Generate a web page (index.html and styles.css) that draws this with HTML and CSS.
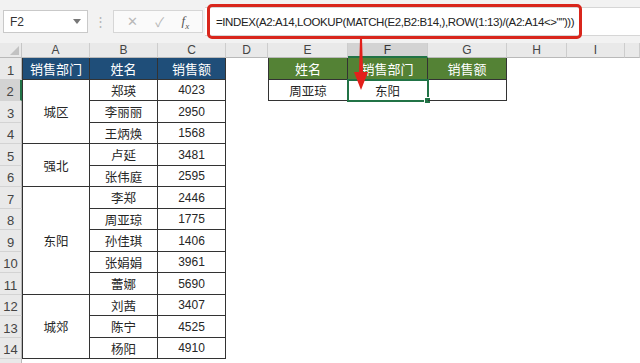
FILE: index.html
```html
<!DOCTYPE html>
<html lang="zh">
<head>
    <meta charset="UTF-8">
    <title>INDEX LOOKUP</title>
    <link rel="stylesheet" href="styles.css">
</head>
<body>

<div class="app">
    <div class="toolbar">
        <div class="namebox">
            <span>F2</span>
            <svg width="8" height="5" viewBox="0 0 8 5"><path d="M0 0 L8 0 L4 5 Z" fill="#777"/></svg>
        </div>
        <div class="grip">⋮</div>
        <div class="fnbox">
            <span class="fn-x">✕</span>
            <span class="fn-ok">✓</span>
            <span class="fn-fx">f<sub>x</sub></span>
        </div>
        <div class="formula">
            <div class="callout">=INDEX(A2:A14,LOOKUP(MATCH(E2,B2:B14,),ROW(1:13)/(A2:A14&lt;&gt;"")))</div>
        </div>
    </div>

    <div class="sheet">
        <!-- column headers -->
        <div class="corner"></div>
        <div class="ch">A</div>
        <div class="ch">B</div>
        <div class="ch">C</div>
        <div class="ch">D</div>
        <div class="ch">E</div>
        <div class="ch ch-sel">F</div>
        <div class="ch">G</div>
        <div class="ch">H</div>
        <div class="ch">I</div>
        <div class="ch"></div>

        <!-- row 1 -->
        <div class="rh">1</div>
        <div class="c hd-blue first">销售部门</div>
        <div class="c hd-blue">姓名</div>
        <div class="c hd-blue">销售额</div>
        <div class="c hd-green first col-e">姓名</div>
        <div class="c hd-green">销售部门</div>
        <div class="c hd-green">销售额</div>

        <!-- row 2 -->
        <div class="rh rh-sel">2</div>
        <div class="c first span3">城区</div>
        <div class="c">郑瑛</div>
        <div class="c num">4023</div>
        <div class="c first col-e">周亚琼</div>
        <div class="c sel">东阳</div>
        <div class="c"></div>

        <div class="rh">3</div>
        <div class="c">李丽丽</div>
        <div class="c num">2950</div>

        <div class="rh">4</div>
        <div class="c">王炳焕</div>
        <div class="c num">1568</div>

        <div class="rh">5</div>
        <div class="c first span2">强北</div>
        <div class="c">卢延</div>
        <div class="c num">3481</div>

        <div class="rh">6</div>
        <div class="c">张伟庭</div>
        <div class="c num">2595</div>

        <div class="rh">7</div>
        <div class="c first span5">东阳</div>
        <div class="c">李郑</div>
        <div class="c num">2446</div>

        <div class="rh">8</div>
        <div class="c">周亚琼</div>
        <div class="c num">1775</div>

        <div class="rh">9</div>
        <div class="c">孙佳琪</div>
        <div class="c num">1406</div>

        <div class="rh">10</div>
        <div class="c">张娟娟</div>
        <div class="c num">3961</div>

        <div class="rh">11</div>
        <div class="c">蕾娜</div>
        <div class="c num">5690</div>

        <div class="rh">12</div>
        <div class="c first span3">城郊</div>
        <div class="c">刘茜</div>
        <div class="c num">3407</div>

        <div class="rh">13</div>
        <div class="c">陈宁</div>
        <div class="c num">4525</div>

        <div class="rh">14</div>
        <div class="c">杨阳</div>
        <div class="c num">4910</div>

        <div class="rh"></div>
    </div>

    <!-- annotation arrow -->
    <svg class="arrow" width="18" height="54" viewBox="0 0 18 54">
        <polygon points="8,0 10,0 11,34 16,34 9,52 2,34 7,34" fill="#e3201b"/>
    </svg>
</div>

</body>
</html>
```

FILE: styles.css
```css
body {
    margin: 0;
    overflow: hidden;
    background-color: #ffffff;
    font-family: "Liberation Sans", "Noto Sans CJK SC", sans-serif;
    color: #222222;
}
.app {
    position: relative;
    width: 640px;
    height: 363px;
    overflow: hidden;
}

/* formula bar */
.toolbar {
    height: 43px;
    display: flex;
    align-items: center;
    background-color: #f2f2f2;
}
.namebox {
    margin-left: 3px;
    width: 85px;
    height: 23px;
    box-sizing: border-box;
    border: 1px solid #c9c9c9;
    background-color: #ffffff;
    display: flex;
    align-items: center;
    justify-content: space-between;
    padding: 0 6px 0 6px;
    font-size: 12px;
    color: #333333;
}
.grip {
    width: 25px;
    text-align: center;
    color: #b5b5b5;
    font-size: 13px;
}
.fnbox {
    width: 90px;
    height: 23px;
    box-sizing: border-box;
    border: 1px solid #d6d6d6;
    background-color: #fafafa;
    display: flex;
    align-items: center;
    justify-content: space-around;
    padding: 0 4px;
}
.fn-x {
    color: #b8b8b8;
    font-size: 13px;
}
.fn-ok {
    color: #b8b8b8;
    font-size: 13px;
}
.fn-fx {
    font-family: "Liberation Serif", serif;
    font-style: italic;
    color: #555555;
    font-size: 13px;
}
.fn-fx sub {
    font-size: 9px;
}
.formula {
    flex: 1;
    margin-left: 2px;
    height: 27px;
    background-color: #ffffff;
    border-top: 1px solid #d6d6d6;
    border-bottom: 1px solid #d6d6d6;
    display: flex;
    align-items: center;
}
.callout {
    margin-left: 2px;
    width: 375px;
    height: 35px;
    flex-shrink: 0;
    box-sizing: border-box;
    border: 3px solid #d9261c;
    border-radius: 5px;
    display: flex;
    align-items: center;
    padding-left: 6px;
    font-size: 11.5px;
    letter-spacing: -0.4px;
    color: #222222;
    white-space: nowrap;
}

/* sheet grid */
.sheet {
    display: grid;
    grid-template-columns: 22px 68px 68px 68px 42px 80px 80px 79px 60px 58px 1fr;
    grid-template-rows: 15px repeat(7, 22px 21px) 20px;
}
.corner {
    background-color: #e9e9e9;
    border-right: 1px solid #c6c6c6;
    border-bottom: 1px solid #b9b9b9;
    position: relative;
}
.corner::after {
    content: "";
    position: absolute;
    right: 2px;
    bottom: 2px;
    border-left: 9px solid transparent;
    border-bottom: 9px solid #c2c2c2;
}
.ch {
    background-color: #e9e9e9;
    border-right: 1px solid #cdcdcd;
    border-bottom: 1px solid #b9b9b9;
    display: flex;
    align-items: center;
    justify-content: center;
    font-size: 12px;
    color: #444444;
}
.ch-sel {
    background-color: #d3d3d3;
    border-bottom: 2px solid #217346;
    color: #333333;
}
.rh {
    grid-column: 1;
    background-color: #e9e9e9;
    border-right: 1px solid #b9b9b9;
    border-bottom: 1px solid #d3d3d3;
    display: flex;
    align-items: flex-end;
    justify-content: center;
    padding-bottom: 1px;
    font-size: 13px;
    color: #444444;
}
.rh-sel {
    background-color: #d3d3d3;
    border-right: 2px solid #217346;
}

/* table cells */
.c {
    border-right: 1px solid #333333;
    border-bottom: 1px solid #333333;
    display: flex;
    align-items: center;
    justify-content: center;
    font-family: "Noto Sans CJK SC", sans-serif;
    font-size: 12.5px;
    color: #262626;
    position: relative;
}
.first {
    border-left: 1px solid #333333;
}
.col-e {
    grid-column: 6;
}
.num {
    font-family: "Liberation Sans", sans-serif;
    font-size: 12px;
}
.span2 {
    grid-row: span 2;
}
.span3 {
    grid-row: span 3;
}
.span5 {
    grid-row: span 5;
}
.hd-blue {
    background-color: #1f4e79;
    color: #ffffff;
    font-size: 13px;
}
.hd-green {
    background-color: #548235;
    color: #ffffff;
    font-size: 13px;
}
.sel {
    outline: 2px solid #217346;
    outline-offset: -1px;
}
.sel::after {
    content: "";
    position: absolute;
    right: -4px;
    bottom: -4px;
    width: 5px;
    height: 5px;
    background-color: #217346;
    border: 1px solid #ffffff;
}

.arrow {
    position: absolute;
    left: 352px;
    top: 38px;
}
```
